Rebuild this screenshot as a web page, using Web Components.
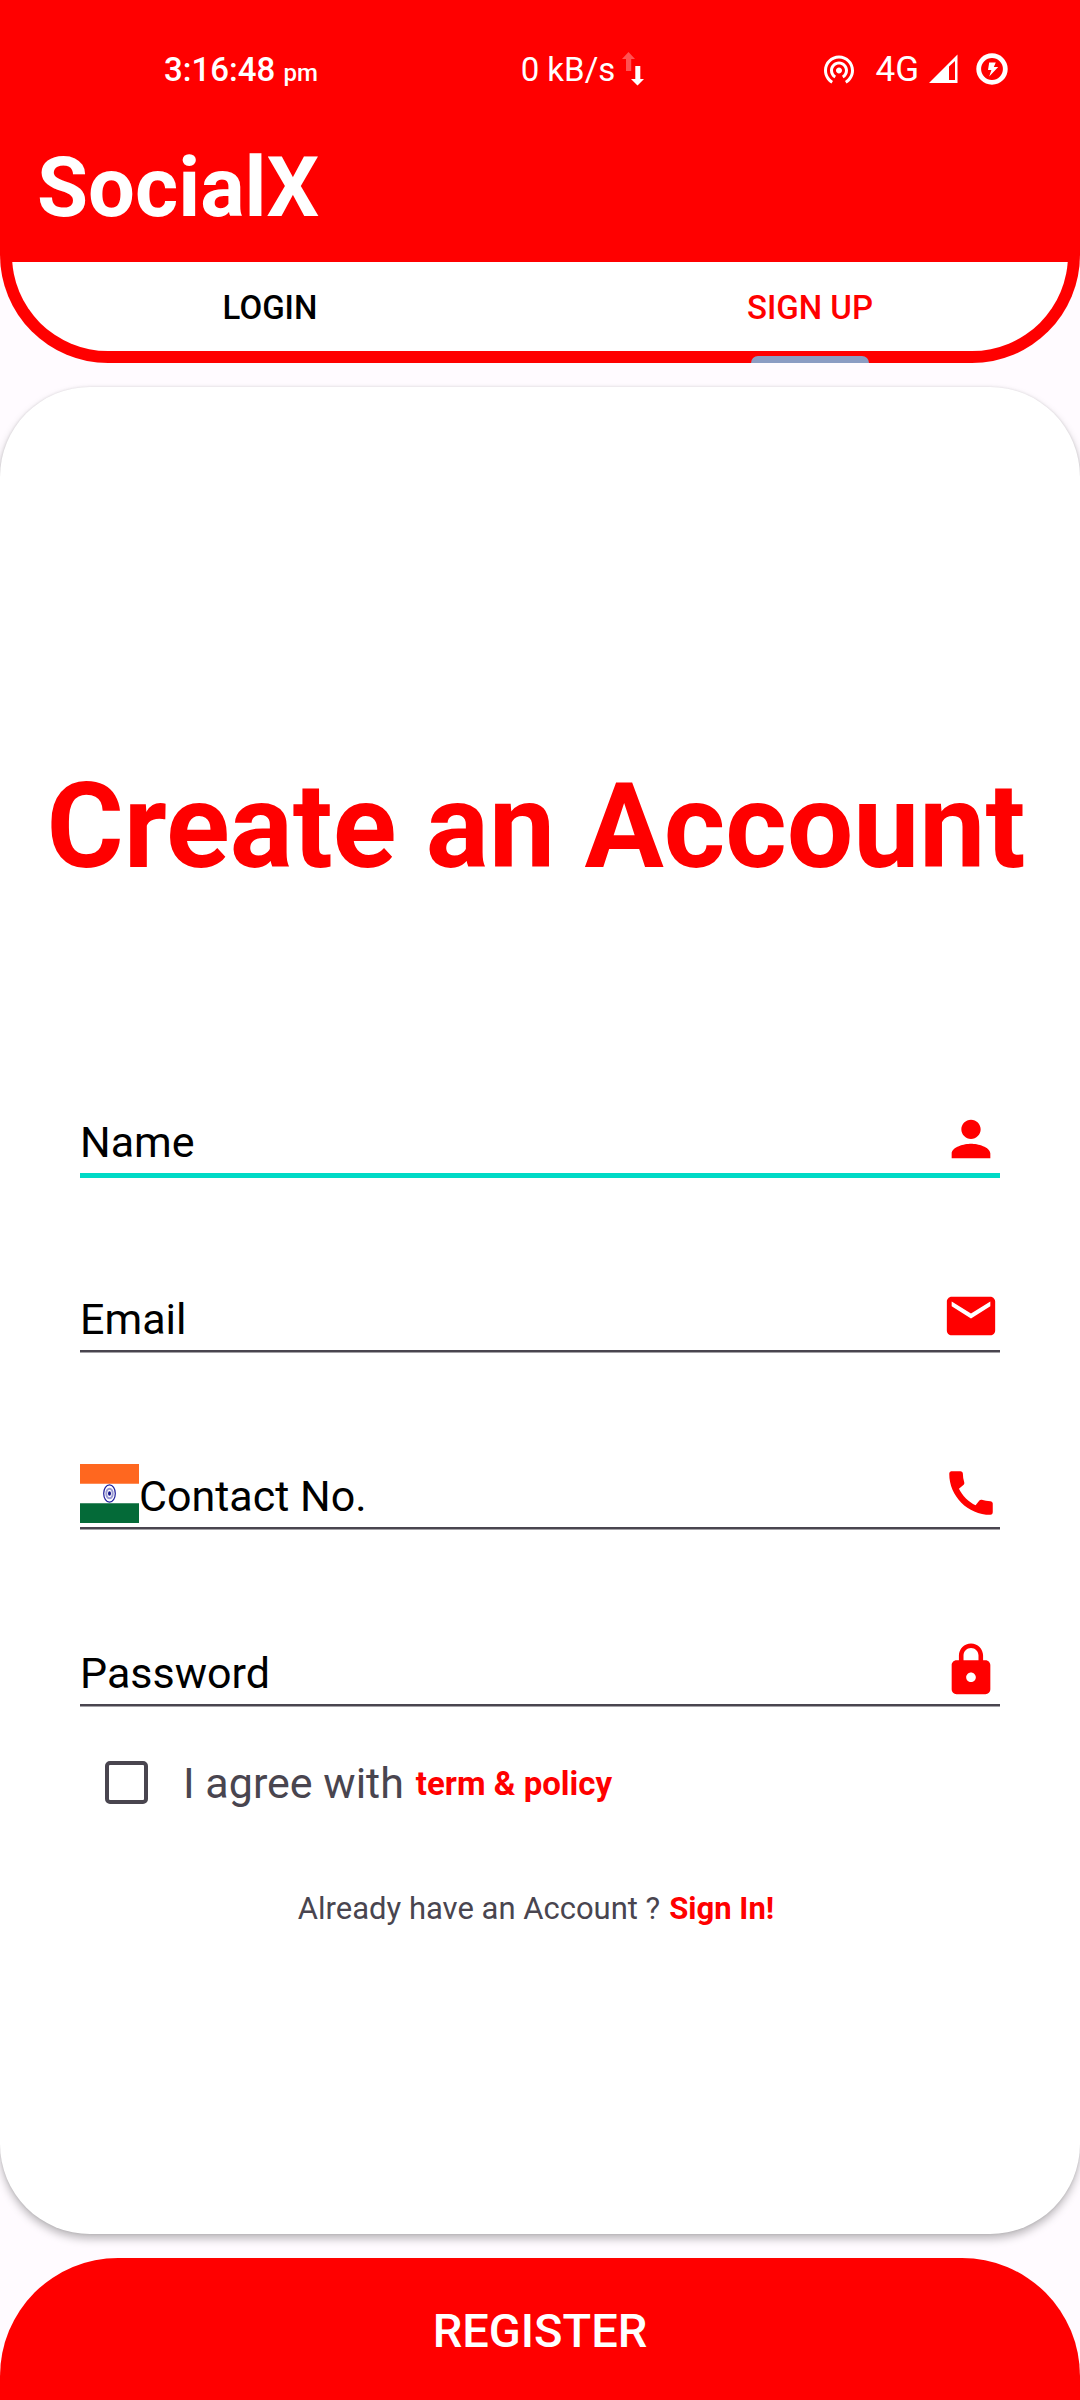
<!DOCTYPE html>
<html lang="en">
<head>
<meta charset="utf-8">
<meta name="viewport" content="width=device-width, initial-scale=1">
<title>SocialX</title>
<style>
  :root { --red: #ff0000; --ink: #49454f; --page: #fffbff; }
  body { margin: 0; background: var(--page); font-family: Roboto, sans-serif; }
</style>
</head>
<body>
<social-app></social-app>

<template id="t-icon">
  <style>
    :host { display: block; flex: none; }
    svg { display: block; width: 100%; height: 100%; fill: currentColor; }
  </style>
</template>

<template id="t-status">
  <style>
    :host { display: grid; grid-template-columns: 358fr 302fr 184fr; align-items: center; box-sizing: border-box;
      height: 112px; padding: 26px 72px 0 164px; color: #fff; font-size: 33px; white-space: nowrap; }
    .time { font-weight: 500; }
    .time small { font-size: 24px; }
    .net, .sys { display: flex; align-items: center; }
    .net { gap: 6px; }
    .sys { justify-content: flex-end; gap: 9px; }
    .sys .wide { margin-right: 9px; }
    .arrows { width: 24px; height: 34px; }
    .hot { width: 36px; height: 36px; }
    .signal { width: 30px; height: 30px; }
    .battery { width: 32px; height: 32px; }
    .cell { font-size: 35px; }
  </style>
  <span class="time">3:16:48 <small>pm</small></span>
  <span class="net"><span>0 kB/s</span><app-icon class="arrows" name="arrows"></app-icon></span>
  <span class="sys">
    <app-icon class="hot wide" name="hotspot"></app-icon>
    <span class="cell">4G</span>
    <app-icon class="signal wide" name="signal"></app-icon>
    <app-icon class="battery" name="battery"></app-icon>
  </span>
</template>

<template id="t-header">
  <style>
    :host { display: block; overflow: hidden; background: var(--red); border-radius: 0 0 108px 108px; }
    h1 { display: flex; align-items: center; height: 150px; margin: 0; padding: 0 37px; color: #fff; font-size: 83px; font-weight: 700; }
  </style>
  <status-bar></status-bar>
  <h1><slot name="title"></slot></h1>
  <slot></slot>
</template>

<template id="t-tabs">
  <style>
    :host { display: grid; grid-auto-flow: column; grid-auto-columns: 1fr; position: relative; overflow: hidden; height: 101px; }
    :host::before { content: ""; position: absolute; inset: -20px 12px 12px; background: #fff; border-radius: 0 0 96px 96px; }
  </style>
  <slot></slot>
</template>

<template id="t-tab">
  <style>
    :host { display: block; position: relative; }
    button { width: 100%; height: 100%; padding: 0 0 10px; border: 0; background: none; color: #000; font: 500 33px Roboto, sans-serif; }
    :host([selected]) button { color: var(--red); }
    :host([selected])::after { content: ""; position: absolute; bottom: 0; left: 50%; width: 118px; height: 7px; margin-left: -59px;
      background: #8b9dc3; border-radius: 7px 7px 0 0; }
  </style>
  <button type="button" role="tab"><slot></slot></button>
</template>

<template id="t-card">
  <style>
    :host { display: block; flex: 1; box-sizing: border-box; margin: 24px 0; padding: 371px 80px 80px; background: #fff; border-radius: 90px;
      box-shadow: 0 5px 8px rgba(0,0,0,.26), 0 0 3px rgba(0,0,0,.12); }
  </style>
  <slot></slot>
</template>

<template id="t-field">
  <style>
    :host { display: block; height: 68px; }
    label { display: flex; align-items: flex-start; height: 63px; border-bottom: 2px solid var(--ink); box-shadow: 0 1px 0 #a4a2a7; color: var(--red); }
    :host([active]) label { border-bottom: 5px solid #00dac6; box-shadow: none; }
    input { flex: 1; min-width: 0; height: 63px; padding: 0; border: 0; outline: 0; background: none; color: #000; font: 400 43px Roboto, sans-serif; }
    input::placeholder { color: #000; opacity: 1; }
    app-icon { width: 58px; height: 58px; }
  </style>
  <label><slot name="lead"></slot><input><app-icon></app-icon></label>
</template>

<template id="t-form">
  <style>
    :host { display: block; }
    h2 { display: flex; justify-content: center; margin: 0 -80px 213px; padding-right: 8px; color: var(--red); font-size: 118px; line-height: 139px; font-weight: 700; white-space: nowrap; }
    .fields { display: grid; gap: 109px; }
    .flag { width: 59px; height: 59px; }
    .agree { display: flex; align-items: center; height: 60px; margin: 44px 0 75px; padding-left: 25px; color: var(--ink); font-size: 43px; }
    .agree label { display: flex; align-items: center; gap: 35px; margin-right: 12px; }
    input { appearance: none; width: 43px; height: 43px; margin: 0 0 2px; border: 4px solid var(--ink); border-radius: 5px; }
    a { color: var(--red); font-weight: 700; text-decoration: none; }
    .agree a { font-size: 33px; }
    .signin { display: flex; justify-content: center; align-items: center; gap: 9px; height: 40px; margin: 0; padding-right: 8px;
      color: var(--ink); font-size: 31px; }
  </style>
  <h2>Create an Account</h2>
  <div class="fields">
    <text-field label="Name" icon="person" active></text-field>
    <text-field label="Email" icon="mail" type="email"></text-field>
    <text-field label="Contact No." icon="phone" type="tel"><app-icon class="flag" slot="lead" name="flag"></app-icon></text-field>
    <text-field label="Password" icon="lock" type="password"></text-field>
  </div>
  <div class="agree">
    <label><input type="checkbox">I agree with</label>
    <a href="#terms">term &amp; policy</a>
  </div>
  <p class="signin"><span>Already have an Account ?</span><a href="#login">Sign In!</a></p>
</template>

<template id="t-action">
  <style>
    :host { display: block; }
    button { display: block; width: 100%; height: 142px; padding: 2px 0 0; border: 0; background: var(--red); color: #fff;
      border-radius: 118px 118px 0 0; font: 500 47px Roboto, sans-serif; }
  </style>
  <button type="button"><slot></slot></button>
</template>

<template id="t-app">
  <style>
    :host { display: flex; flex-direction: column; min-height: 100vh; overflow: hidden; }
  </style>
  <app-header>
    <span slot="title">SocialX</span>
    <tab-bar role="tablist">
      <tab-item>LOGIN</tab-item>
      <tab-item selected>SIGN UP</tab-item>
    </tab-bar>
  </app-header>
  <form-card><signup-form></signup-form></form-card>
  <action-button>REGISTER</action-button>
</template>

<script>
  const ICONS = {
    person: ['0 0 24 24', '<path d="M12 12c2.21 0 4-1.79 4-4s-1.79-4-4-4-4 1.79-4 4 1.79 4 4 4zm0 2c-2.67 0-8 1.34-8 4v2h16v-2c0-2.66-5.33-4-8-4z"/>'],
    mail: ['0 0 24 24', '<path d="M20 4H4c-1.1 0-1.99.9-1.99 2L2 18c0 1.1.9 2 2 2h16c1.1 0 2-.9 2-2V6c0-1.1-.9-2-2-2zm0 4l-8 5-8-5V6l8 5 8-5v2z"/>'],
    phone: ['0 0 24 24', '<path d="M20.01 15.38c-1.23 0-2.42-.2-3.53-.56-.35-.12-.74-.03-1.01.24l-1.57 1.97c-2.83-1.35-5.48-3.9-6.89-6.83l1.95-1.66c.27-.28.35-.67.24-1.02-.37-1.11-.56-2.3-.56-3.53 0-.54-.45-.99-.99-.99H4.19C3.65 3 3 3.24 3 3.99 3 13.28 10.73 21 20.01 21c.71 0 .99-.63.99-1.18v-3.45c0-.54-.45-.99-.99-.99z"/>'],
    lock: ['0 0 24 24', '<path d="M18 8h-1V6c0-2.76-2.24-5-5-5S7 3.24 7 6v2H6c-1.1 0-2 .9-2 2v10c0 1.1.9 2 2 2h12c1.1 0 2-.9 2-2V10c0-1.1-.9-2-2-2zm-6 9c-1.1 0-2-.9-2-2s.9-2 2-2 2 .9 2 2-.9 2-2 2zm3.1-9H8.9V6c0-1.71 1.39-3.1 3.1-3.1 1.71 0 3.1 1.39 3.1 3.1v2z"/>'],
    hotspot: ['0 0 24 24', '<path d="M12 11c-1.1 0-2 .9-2 2s.9 2 2 2 2-.9 2-2-.9-2-2-2zm6 2c0-3.31-2.69-6-6-6s-6 2.69-6 6c0 2.22 1.21 4.15 3 5.19l1-1.74c-1.19-.7-2-1.97-2-3.45 0-2.21 1.79-4 4-4s4 1.79 4 4c0 1.48-.81 2.75-2 3.45l1 1.74c1.79-1.04 3-2.97 3-5.19zM12 3C6.48 3 2 7.48 2 13c0 3.7 2.01 6.92 4.99 8.65l1-1.73C5.61 18.53 4 15.96 4 13c0-4.42 3.58-8 8-8s8 3.58 8 8c0 2.96-1.61 5.53-4 6.92l1 1.73c2.99-1.73 5-4.95 5-8.65 0-5.52-4.48-10-10-10z"/>'],
    signal: ['0 0 30 30', '<path fill-rule="evenodd" d="M29.500 .5v28.500H1zM27 7L21 12.500V26h6z"/>'],
    battery: ['0 0 32 32', '<circle cx="16" cy="16" r="13.300" fill="none" stroke="currentColor" stroke-width="4.800"/><path d="M13.200 9.500h6.600l-2 4.600h4.400l-9 9.400 2.200-6.400h-3.400z"/>'],
    arrows: ['0 0 24 34', '<path opacity=".32" d="M7.500 0l6.500 7h-3.800v12H5V7H1z"/><path d="M14.300 14h5v13H23l-6.500 6.500L10 27h4.300z"/>'],
    flag: ['0 0 59 59', '<path fill="#ff671f" d="M0 0h59v20H0z"/><path fill="#fff" d="M0 19.700h59v20H0z"/><path fill="#046a38" d="M0 39.300h59V59H0z"/><g fill="none" stroke="#1d1d9b"><ellipse cx="29.500" cy="29.500" rx="5.800" ry="8.600" stroke-width="1.200"/><ellipse cx="29.500" cy="29.500" rx="3.200" ry="4.800" stroke-width="2" opacity=".45"/></g><ellipse cx="29.500" cy="29.500" rx="1.500" ry="2.200" fill="#12128c"/>']
  };

  class Base extends HTMLElement {
    constructor(id) {
      super();
      this.attachShadow({ mode: 'open' }).append(document.getElementById(id).content.cloneNode(true));
    }
  }
  const define = (tag, id) => customElements.define(tag, class extends Base { constructor() { super(id); } });

  customElements.define('app-icon', class extends Base {
    static observedAttributes = ['name'];
    constructor() { super('t-icon'); }
    attributeChangedCallback(attr, old, name) {
      const [box, shapes] = ICONS[name];
      this.shadowRoot.querySelector('svg')?.remove();
      this.shadowRoot.querySelector('style').insertAdjacentHTML('afterend', `<svg viewBox="${box}" aria-hidden="true">${shapes}</svg>`);
    }
  });

  customElements.define('text-field', class extends Base {
    constructor() { super('t-field'); }
    connectedCallback() {
      const input = this.shadowRoot.querySelector('input');
      input.type = this.getAttribute('type') || 'text';
      input.placeholder = this.getAttribute('label');
      input.setAttribute('aria-label', this.getAttribute('label'));
      this.shadowRoot.querySelector('app-icon').setAttribute('name', this.getAttribute('icon'));
    }
  });

  define('status-bar', 't-status');
  define('tab-item', 't-tab');
  define('tab-bar', 't-tabs');
  define('app-header', 't-header');
  define('signup-form', 't-form');
  define('form-card', 't-card');
  define('action-button', 't-action');
  define('social-app', 't-app');
</script>
</body>
</html>
